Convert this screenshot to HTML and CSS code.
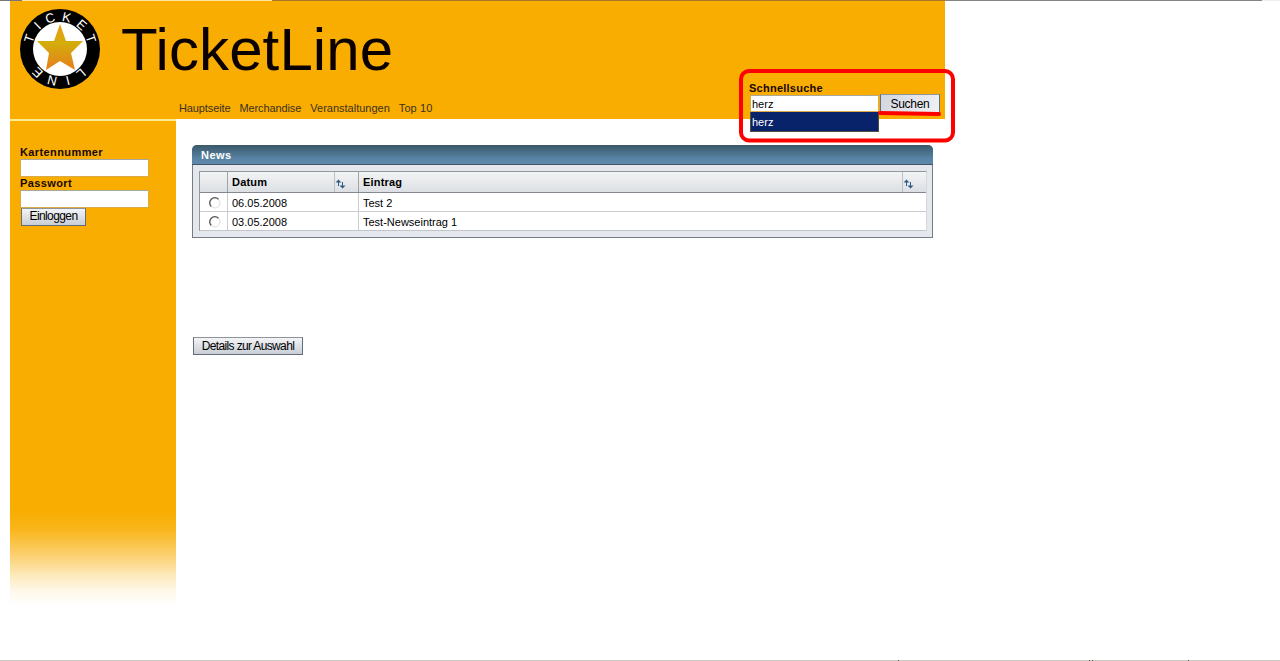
FILE: index.html
```html
<!DOCTYPE html>
<html lang="de">
<head>
<meta charset="utf-8">
<title>TicketLine</title>
<link rel="stylesheet" href="styles.css">
</head>
<body>
<div class="page">
  <header class="header">
    <svg class="logo" width="82" height="82" viewBox="-41 -41 82 82">
      <defs><linearGradient id="gold" x1="0" y1="0" x2="0" y2="1"><stop offset="0" stop-color="#ee9b13"/><stop offset=".42" stop-color="#d3ad0c"/><stop offset="1" stop-color="#e77e1a"/></linearGradient></defs>
      <circle r="40"/>
      <circle r="27" fill="#fff"/>
      <path fill="url(#gold)" d="M0-25 6-8H23L11 4 15 21 0 12-14 21-11 4-23-8H-6Z"/>
      <g class="ring">
        <text y="-28" transform="rotate(-71)">T</text>
        <text y="-28" transform="rotate(-44)">I</text>
        <text y="-28" transform="rotate(-18)">C</text>
        <text y="-28" transform="rotate(12)">K</text>
        <text y="-28" transform="rotate(42)">E</text>
        <text y="-28" transform="rotate(71)">T</text>
        <text y="-28" transform="rotate(139)">L</text>
        <text y="-28" transform="rotate(166)">I</text>
        <text y="-28" transform="rotate(194)">N</text>
        <text y="-28" transform="rotate(224)">E</text>
      </g>
    </svg>
    <div class="brand">
      <h1 class="title">TicketLine</h1>
      <nav class="nav"><a>Hauptseite</a><a>Merchandise</a><a>Veranstaltungen</a><a>Top 10</a></nav>
    </div>
    <form class="search">
      <label class="label">Schnellsuche</label>
      <div class="search-row">
        <div class="field field-search">herz</div>
        <div class="button button-search">Suchen</div>
      </div>
      <div class="suggestion">herz</div>
      <svg class="marker" width="216" height="74" viewBox="0 0 216 74"><rect x="2" y="2" width="212" height="69.500" rx="8"/><path d="M141 44 200 45"/></svg>
    </form>
  </header>
  <div class="body">
    <aside class="sidebar">
      <label class="label">Kartennummer</label>
      <div class="field"></div>
      <label class="label">Passwort</label>
      <div class="field"></div>
      <div class="button button-login">Einloggen</div>
    </aside>
    <main class="main">
      <section class="panel">
        <h2 class="panel-title">News</h2>
        <div class="panel-body">
          <div class="table">
            <div class="row head">
              <div class="cell"></div>
              <div class="cell"><span>Datum</span><svg class="sort" width="24" height="20"><path d="M3.500 14V9M7.500 10v6"/><path class="tip" d="M.5 10.500 3.500 7.500 6.500 10.500ZM4.500 13.500 7.500 16.500 10.500 13.500Z"/></svg></div>
              <div class="cell"><span>Eintrag</span><svg class="sort" width="24" height="20"><path d="M3.500 14V9M7.500 10v6"/><path class="tip" d="M.5 10.500 3.500 7.500 6.500 10.500ZM4.500 13.500 7.500 16.500 10.500 13.500Z"/></svg></div>
            </div>
            <div class="row">
              <div class="cell"><svg class="radio" width="12" height="12"><circle cx="6" cy="6" r="5"/><path d="M2.200 9.500A5 5 0 1 1 9.500 2.200"/></svg></div>
              <div class="cell">06.05.2008</div><div class="cell">Test 2</div>
            </div>
            <div class="row">
              <div class="cell"><svg class="radio" width="12" height="12"><circle cx="6" cy="6" r="5"/><path d="M2.200 9.500A5 5 0 1 1 9.500 2.200"/></svg></div>
              <div class="cell">03.05.2008</div><div class="cell">Test-Newseintrag 1</div>
            </div>
          </div>
        </div>
      </section>
      <div class="button button-details">Details zur Auswahl</div>
    </main>
  </div>
  <footer class="status"><i></i><i></i><i></i><i></i></footer>
  <div class="top-edge"></div>
</div>
</body>
</html>
```
FILE: styles.css
```css
* { box-sizing: border-box; }
body { margin: 0; background: #fff; font: 11px/13px "Liberation Sans", Arial, sans-serif; color: #000; overflow: hidden; }
.page { position: relative; height: 661px; display: flex; flex-direction: column; }
.top-edge { position: absolute; top: 0; left: 0; width: 100%; height: 1px; background: linear-gradient(90deg, #777 22px, #ffe3a0 22px 272px, #a87824 272px 945px, #858585 945px 1262px, #eee 1262px); }
.header { width: 935px; height: 119px; margin-left: 10px; background: #f8ad00; display: flex; flex: none; padding-left: 9px; }
.logo { margin-top: 8px; flex: none; }
.ring { fill: #fff; font-size: 13px; text-anchor: middle; }
.brand { padding: 16px 0 0 20px; width: 648px; flex: none; }
.title { margin: 0; font-size: 60px; line-height: 68px; font-weight: normal; color: #0b0000; letter-spacing: .1px; }
.nav { display: flex; gap: 9px; margin: 18px 0 0 58px; color: #3c3020; }
.nav a { letter-spacing: -.12px; white-space: nowrap; }
.nav a:nth-child(2) { letter-spacing: -.1px; }
.nav a:nth-child(3) { letter-spacing: 0; }
.nav a:nth-child(4) { letter-spacing: .1px; }
.search { position: relative; padding-top: 82px; width: 196px; flex: none; margin-left: -1px; }
.label { display: block; font-weight: bold; letter-spacing: .4px; color: #180800; }
.search .label { letter-spacing: .25px; padding-left: 1px; }
.search-row { display: flex; gap: 1px; padding-left: 2px; }
.field { width: 129px; height: 17px; background: #fff; border: 1px solid #d9ab48; border-top-color: #aaa79c; }
.field-search { padding: 2px 1px; }
.button { display: flex; align-items: center; justify-content: center; height: 18px; border: 1px solid #646d7c; border-top-color: #8f949b; background: linear-gradient(#f3f4f6, #c9ced6); white-space: nowrap; font-size: 12px; }
.button-search { width: 60px; height: 21px; margin-top: -1px; background: linear-gradient(120deg, #d1d6df, #f1f2f4); font-size: 12px; letter-spacing: -.3px; }
.suggestion { position: absolute; left: 2px; top: 112px; width: 129px; height: 20px; border: 1px solid #554d42; border-top: 0; background: #082369; color: #fff; padding: 4px 1px; }
.marker { position: absolute; left: -9px; top: 69px; fill: none; stroke: #f00; stroke-width: 4; stroke-linecap: round; }
.body { display: flex; height: 490px; border-top: 2px solid #fff; }
.sidebar { width: 166px; height: 484px; margin-left: 10px; padding: 25px 10px; background: linear-gradient(#f8ad00 390px, #f9b51a 408px, #fbd276 436px, #fdebc1 456px, #fff8e9 470px, #fff 484px); box-shadow: 0 -2px #ffed96; }
.sidebar .field { height: 18px; }
.button-login { width: 65px; margin: 0 0 0 1px; letter-spacing: -.6px; padding-bottom: 2px; }
.main { padding: 24px 0 0 16px; }
.panel { width: 741px; height: 93px; border: 1px solid #777b83; border-top: 0; border-radius: 5px 5px 0 0; background: #e4e8ed; }
.panel-title { margin: 0 -1px; height: 20px; padding: 4px 9px; border-radius: 5px 5px 0 0; border-bottom: 1px solid #405467; background: linear-gradient(#3b5868, #5783a5 70%, #6089a9); color: #fff; font-size: 11px; line-height: 13px; letter-spacing: .5px; }
.panel-body { padding: 6px; }
.table { width: 728px; border: 1px solid #92969d; border-right-color: #d5d9df; border-bottom-color: #c2c5ca; background: #fff; }
.row { display: grid; grid-template-columns: 27px 131px 1fr; height: 18px; letter-spacing: 0; }
.row.head { height: 21px; background: linear-gradient(#f3f4f5, #dcdfe3); border-bottom: 1px solid #85898f; font-weight: bold; letter-spacing: .2px; }
.row:nth-child(2) { height: 19px; border-bottom: 1px solid #c9ccd0; }
.cell { display: flex; align-items: center; justify-content: space-between; padding-left: 4px; border-left: 1px solid #c9ccd0; }
.row:not(.head) .cell { padding-top: 2px; }
.head .cell { border-color: #9fa3a9; }
.cell:first-child { border: 0; padding-left: 9px; }
.sort { border-left: 1px solid #bcc1c8; fill: none; stroke: #315a86; }
.tip { fill: #315a86; stroke: none; }
.radio circle { fill: #fff; stroke: #ddd; }
.radio path { fill: none; stroke: #555; stroke-width: 1.300; }
.button-details { width: 110px; margin: 99px 0 0 1px; letter-spacing: -.65px; }
.status { margin-top: auto; height: 1px; background: #cbc9c2; display: flex; padding-left: 898px; }
.status i { width: 1px; background: #555; }
.status i:nth-child(2) { margin-left: 190px; }
.status i:nth-child(3) { margin-left: 2px; }
.status i:nth-child(4) { margin-left: 95px; }
```
